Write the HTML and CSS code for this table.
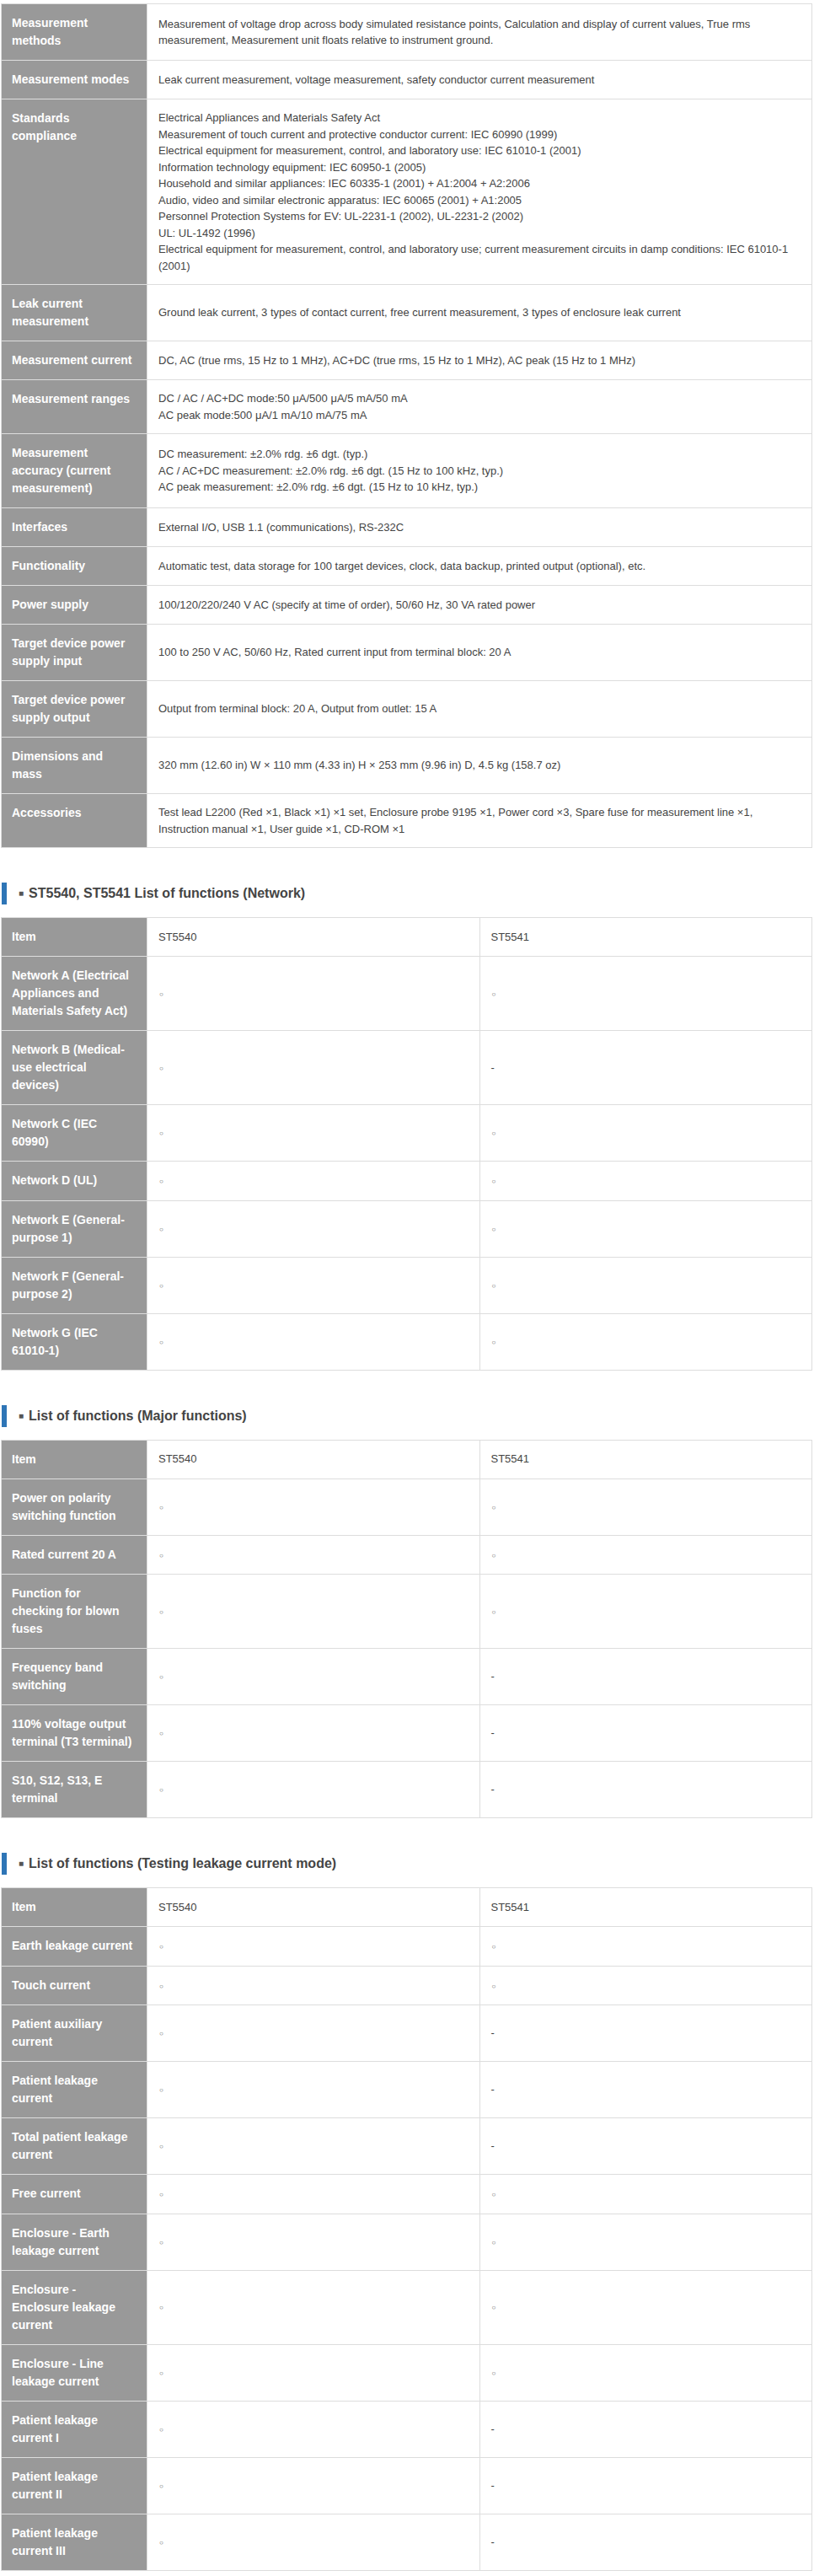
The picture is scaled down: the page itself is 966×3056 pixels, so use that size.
FILE: index.html
```html
<!DOCTYPE html>
<html lang="en">
<head>
<meta charset="utf-8">
<title>ST5540 / ST5541 Specifications</title>
<link rel="stylesheet" href="styles.css">
</head>
<body>
<div class="page">

<table class="spec">
  <colgroup><col class="c-head"><col></colgroup>
  <tbody>
    <tr><th>Measurement methods</th><td>Measurement of voltage drop across body simulated resistance points, Calculation and display of current values, True rms measurement, Measurement unit floats relative to instrument ground.</td></tr>
    <tr><th>Measurement modes</th><td>Leak current measurement, voltage measurement, safety conductor current measurement</td></tr>
    <tr><th>Standards compliance</th><td>Electrical Appliances and Materials Safety Act<br>Measurement of touch current and protective conductor current: IEC 60990 (1999)<br>Electrical equipment for measurement, control, and laboratory use: IEC 61010-1 (2001)<br>Information technology equipment: IEC 60950-1 (2005)<br>Household and similar appliances: IEC 60335-1 (2001) + A1:2004 + A2:2006<br>Audio, video and similar electronic apparatus: IEC 60065 (2001) + A1:2005<br>Personnel Protection Systems for EV: UL-2231-1 (2002), UL-2231-2 (2002)<br>UL: UL-1492 (1996)<br>Electrical equipment for measurement, control, and laboratory use; current measurement circuits in damp conditions: IEC 61010-1 (2001)</td></tr>
    <tr><th>Leak current measurement</th><td>Ground leak current, 3 types of contact current, free current measurement, 3 types of enclosure leak current</td></tr>
    <tr><th>Measurement current</th><td>DC, AC (true rms, 15 Hz to 1 MHz), AC+DC (true rms, 15 Hz to 1 MHz), AC peak (15 Hz to 1 MHz)</td></tr>
    <tr><th>Measurement ranges</th><td>DC / AC / AC+DC mode:50 μA/500 μA/5 mA/50 mA<br>AC peak mode:500 μA/1 mA/10 mA/75 mA</td></tr>
    <tr><th>Measurement accuracy (current measurement)</th><td>DC measurement: ±2.0% rdg. ±6 dgt. (typ.)<br>AC / AC+DC measurement: ±2.0% rdg. ±6 dgt. (15 Hz to 100 kHz, typ.)<br>AC peak measurement: ±2.0% rdg. ±6 dgt. (15 Hz to 10 kHz, typ.)</td></tr>
    <tr><th>Interfaces</th><td>External I/O, USB 1.1 (communications), RS-232C</td></tr>
    <tr><th>Functionality</th><td>Automatic test, data storage for 100 target devices, clock, data backup, printed output (optional), etc.</td></tr>
    <tr><th>Power supply</th><td>100/120/220/240 V AC (specify at time of order), 50/60 Hz, 30 VA rated power</td></tr>
    <tr><th>Target device power supply input</th><td>100 to 250 V AC, 50/60 Hz, Rated current input from terminal block: 20 A</td></tr>
    <tr><th>Target device power supply output</th><td>Output from terminal block: 20 A, Output from outlet: 15 A</td></tr>
    <tr><th>Dimensions and mass</th><td>320 mm (12.60 in) W × 110 mm (4.33 in) H × 253 mm (9.96 in) D, 4.5 kg (158.7 oz)</td></tr>
    <tr><th>Accessories</th><td>Test lead L2200 (Red ×1, Black ×1) ×1 set, Enclosure probe 9195 ×1, Power cord ×3, Spare fuse for measurement line ×1, Instruction manual ×1, User guide ×1, CD-ROM ×1</td></tr>
  </tbody>
</table>

<h2 class="section-title"><span class="sq">■</span>ST5540, ST5541 List of functions (Network)</h2>
<table class="spec">
  <colgroup><col class="c-head"><col class="c-val"><col class="c-val"></colgroup>
  <tbody>
    <tr><th>Item</th><td>ST5540</td><td>ST5541</td></tr>
    <tr><th>Network A (Electrical Appliances and Materials Safety Act)</th><td><span class="mark">○</span></td><td><span class="mark">○</span></td></tr>
    <tr><th>Network B (Medical-use electrical devices)</th><td><span class="mark">○</span></td><td>-</td></tr>
    <tr><th>Network C (IEC 60990)</th><td><span class="mark">○</span></td><td><span class="mark">○</span></td></tr>
    <tr><th>Network D (UL)</th><td><span class="mark">○</span></td><td><span class="mark">○</span></td></tr>
    <tr><th>Network E (General-purpose 1)</th><td><span class="mark">○</span></td><td><span class="mark">○</span></td></tr>
    <tr><th>Network F (General-purpose 2)</th><td><span class="mark">○</span></td><td><span class="mark">○</span></td></tr>
    <tr><th>Network G (IEC 61010-1)</th><td><span class="mark">○</span></td><td><span class="mark">○</span></td></tr>
  </tbody>
</table>

<h2 class="section-title"><span class="sq">■</span>List of functions (Major functions)</h2>
<table class="spec">
  <colgroup><col class="c-head"><col class="c-val"><col class="c-val"></colgroup>
  <tbody>
    <tr><th>Item</th><td>ST5540</td><td>ST5541</td></tr>
    <tr><th>Power on polarity switching function</th><td><span class="mark">○</span></td><td><span class="mark">○</span></td></tr>
    <tr><th>Rated current 20 A</th><td><span class="mark">○</span></td><td><span class="mark">○</span></td></tr>
    <tr><th>Function for checking for blown fuses</th><td><span class="mark">○</span></td><td><span class="mark">○</span></td></tr>
    <tr><th>Frequency band switching</th><td><span class="mark">○</span></td><td>-</td></tr>
    <tr><th>110% voltage output terminal (T3 terminal)</th><td><span class="mark">○</span></td><td>-</td></tr>
    <tr><th>S10, S12, S13, E terminal</th><td><span class="mark">○</span></td><td>-</td></tr>
  </tbody>
</table>

<h2 class="section-title"><span class="sq">■</span>List of functions (Testing leakage current mode)</h2>
<table class="spec">
  <colgroup><col class="c-head"><col class="c-val"><col class="c-val"></colgroup>
  <tbody>
    <tr><th>Item</th><td>ST5540</td><td>ST5541</td></tr>
    <tr><th>Earth leakage current</th><td><span class="mark">○</span></td><td><span class="mark">○</span></td></tr>
    <tr><th>Touch current</th><td><span class="mark">○</span></td><td><span class="mark">○</span></td></tr>
    <tr><th>Patient auxiliary current</th><td><span class="mark">○</span></td><td>-</td></tr>
    <tr><th>Patient leakage current</th><td><span class="mark">○</span></td><td>-</td></tr>
    <tr><th>Total patient leakage current</th><td><span class="mark">○</span></td><td>-</td></tr>
    <tr><th>Free current</th><td><span class="mark">○</span></td><td><span class="mark">○</span></td></tr>
    <tr><th>Enclosure - Earth leakage current</th><td><span class="mark">○</span></td><td><span class="mark">○</span></td></tr>
    <tr><th>Enclosure - Enclosure leakage current</th><td><span class="mark">○</span></td><td><span class="mark">○</span></td></tr>
    <tr><th>Enclosure - Line leakage current</th><td><span class="mark">○</span></td><td><span class="mark">○</span></td></tr>
    <tr><th>Patient leakage current I</th><td><span class="mark">○</span></td><td>-</td></tr>
    <tr><th>Patient leakage current II</th><td><span class="mark">○</span></td><td>-</td></tr>
    <tr><th>Patient leakage current III</th><td><span class="mark">○</span></td><td>-</td></tr>
  </tbody>
</table>

</div>
</body>
</html>
```

FILE: styles.css
```css
html, body {
  margin: 0;
  padding: 0;
  background: #ffffff;
}

body {
  font-family: "Liberation Sans", Arial, sans-serif;
  color: #444444;
}

.page {
  padding: 4px 2px 6px 1px;
}

.spec {
  width: 100%;
  border-collapse: collapse;
  table-layout: fixed;
  border: 1px solid #dddddd;
}

.spec .c-head {
  width: 173px;
}

.spec th,
.spec td {
  border: 1px solid #dddddd;
  padding: 12px 13px;
  text-align: left;
}

.spec th {
  background: #999999;
  color: #ffffff;
  font-size: 14px;
  font-weight: bold;
  line-height: 21px;
  vertical-align: top;
  padding-left: 12px;
  padding-right: 16px;
}

.spec td {
  background: #ffffff;
  color: #444444;
  font-size: 13px;
  line-height: 19.5px;
  vertical-align: middle;
}

.spec .mark {
  font-size: 8px;
  color: #555555;
  padding-left: 1px;
}

.section-title {
  display: flex;
  align-items: center;
  height: 26px;
  margin: 41px 0 15px 1px;
  padding-left: 14px;
  border-left: 6px solid #2e75b6;
  font-size: 16px;
  font-weight: bold;
  color: #444444;
  line-height: 26px;
}

.section-title .sq {
  font-size: 10px;
  margin-right: 6px;
  color: #555555;
}
```
